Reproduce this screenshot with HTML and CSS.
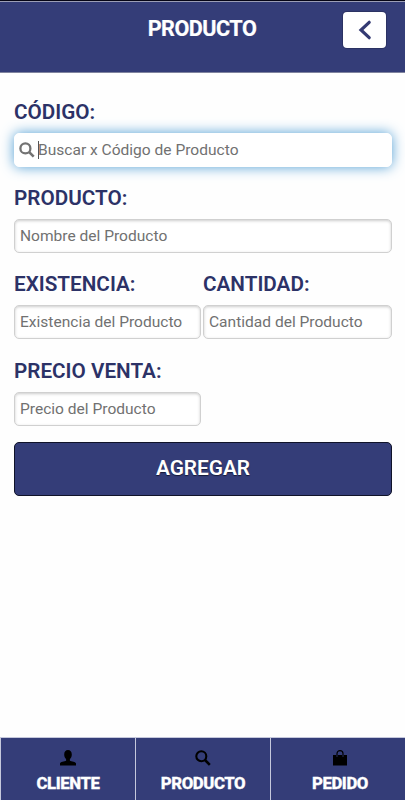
FILE: index.html
```html
<!DOCTYPE html>
<html lang="es">
<head>
<meta charset="utf-8">
<meta name="viewport" content="width=device-width, initial-scale=1">
<title>Producto</title>
<link rel="stylesheet" href="styles.css">
</head>
<body>
<header class="header">
  <span></span>
  <h1 class="title">PRODUCTO</h1>
  <button class="back" aria-label="Volver"><svg width="43" height="36" viewBox="0 0 43 36"><path d="M26.2 10.3 18 18l8.200 7.700" fill="none" stroke="#343a73" stroke-width="3.200" stroke-linecap="round"/></svg></button>
</header>
<main class="form">
  <section class="field">
    <h2 class="label">CÓDIGO:</h2>
    <div class="input focused"><svg class="search" width="16" height="16" viewBox="0 0 16 16"><circle cx="6.4" cy="6.4" r="5" fill="none" stroke="#737373" stroke-width="2.3"/><path d="m10.2 10.2 4.5 4.500" stroke="#737373" stroke-width="2.6"/></svg><i class="caret"></i><span>Buscar x Código de Producto</span></div>
  </section>
  <section class="field">
    <h2 class="label">PRODUCTO:</h2>
    <div class="input"><span>Nombre del Producto</span></div>
  </section>
  <div class="columns">
    <section class="field">
      <h2 class="label">EXISTENCIA:</h2>
      <div class="input"><span>Existencia del Producto</span></div>
    </section>
    <section class="field">
      <h2 class="label">CANTIDAD:</h2>
      <div class="input"><span>Cantidad del Producto</span></div>
    </section>
    <section class="field">
      <h2 class="label">PRECIO VENTA:</h2>
      <div class="input"><span>Precio del Producto</span></div>
    </section>
  </div>
  <button class="submit">AGREGAR</button>
</main>
<nav class="tabs">
  <a class="tab"><svg width="16" height="16" viewBox="0 0 16 16"><path d="M8 0C5.700 0 4.200 1.700 4.200 4.400c0 2 .8 3.700 1.900 4.700v1.600C4.700 11.500 0 11.500 0 13.500V15.500h16v-2c0-2-4.700-2-6.100-2.800V9.100c1.100-1 1.900-2.700 1.900-4.700C11.800 1.700 10.300 0 8 0Z"/></svg><span>CLIENTE</span></a>
  <a class="tab"><svg width="16" height="16" viewBox="0 0 16 16"><circle cx="6.300" cy="6.300" r="5" fill="none" stroke="#000" stroke-width="2.100"/><path d="m10 10 4.800 4.800" stroke="#000" stroke-width="2.600"/></svg><span>PRODUCTO</span></a>
  <a class="tab"><svg width="16" height="16" viewBox="0 0 16 16"><path d="M1 5h14v10.500H1Z"/><path d="M5 7V3.600a3 3 0 0 1 6 0V7" fill="none" stroke="#000" stroke-width="1.200"/><path d="M5 5v2M11 5v2" stroke="#343d78" stroke-width=".7"/></svg><span>PEDIDO</span></a>
</nav>
</body>
</html>
```
FILE: styles.css
```css
* { box-sizing: border-box; }
body {
  margin: 0;
  height: 800px;
  display: flex;
  flex-direction: column;
  font-family: Roboto, sans-serif;
  background: #fefefe;
  overflow: hidden;
}
h1, h2 { margin: 0; }
.header {
  height: 73px;
  border-top: 1px solid #050515;
  border-bottom: 1px solid #80849f;
  box-shadow: inset 0 1px #9b9eb6;
  background: #343d78;
  display: grid;
  grid-template-columns: 1fr auto 1fr;
  align-items: start;
  padding: 11px 19px 0 18px;
}
.title {
  color: #fff;
  font-size: 21.6px;
  line-height: 26px;
  font-weight: 700;
  padding-top: 4px;
  letter-spacing: -.5px;
  -webkit-text-stroke: .2px #fff;
}
.back {
  justify-self: end;
  width: 43px;
  height: 36px;
  padding: 0;
  border: 0;
  border-radius: 4px;
  background: #fff;
  box-shadow: 0 0 0 1px #2b3263;
}
.back svg { display: block; }
.form {
  flex: 1;
  padding: 25.600px 13px 0 14px;
}
.field { height: 86.4px; }
.label {
  height: 34px;
  line-height: 26px;
  font-size: 20.7px;
  font-weight: 600;
  color: #2c3267;
  white-space: nowrap;
}
.input {
  height: 34px;
  display: flex;
  align-items: center;
  padding: 0 5px;
  border: 1px solid #d0d0d0;
  border-radius: 5px;
  background: #fff;
  box-shadow: inset 0 1px 3px #ccc;
  color: #717171;
  font-size: 15.55px;
  white-space: nowrap;
}
.focused {
  border-color: #fff;
  box-shadow: 0 0 13px #519fd5;
  padding-left: 4px;
}
.caret {
  width: 1px;
  height: 18px;
  margin: 0 -1px 0 3px;
  background: #555;
}
.columns {
  display: grid;
  grid-template-columns: 187px 189px;
  column-gap: 2px;
}
.submit {
  display: block;
  width: 100%;
  height: 54px;
  margin-top: -2.600px;
  border: 1px solid #101329;
  border-radius: 5px;
  background: #343d78;
  color: #fff;
  font: 600 20.800px Roboto, sans-serif;
  text-shadow: 0 1px 1px #151936;
  padding-bottom: 3px;
}
.tabs {
  height: 63px;
  display: grid;
  grid-template-columns: 134px 134px 138px;
  gap: 1px;
  padding: 1px 0 0 1px;
  background: #c5c8dc;
}
.tab {
  display: flex;
  flex-direction: column;
  align-items: center;
  padding-top: 12px;
  background: #343d78;
  color: #fff;
  font-size: 16.8px;
  line-height: 22px;
  font-weight: 800;
  letter-spacing: -.45px;
  -webkit-text-stroke: .3px #fff;
}
.tab svg { flex: none; margin-bottom: 6px; }
```
